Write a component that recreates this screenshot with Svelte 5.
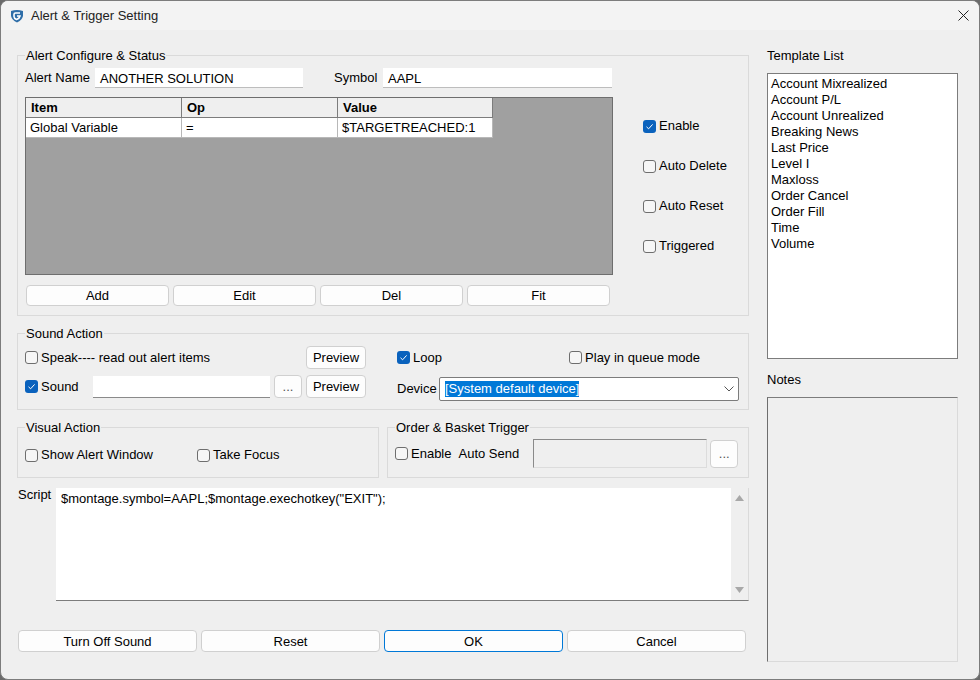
<script>
  const templates = [
    'Account Mixrealized',
    'Account P/L',
    'Account Unrealized',
    'Breaking News',
    'Last Price',
    'Level I',
    'Maxloss',
    'Order Cancel',
    'Order Fill',
    'Time',
    'Volume',
  ]
  const flags = [
    { label: 'Enable', checked: true },
    { label: 'Auto Delete', checked: false },
    { label: 'Auto Reset', checked: false },
    { label: 'Triggered', checked: false },
  ]
  const footer = ['Turn Off Sound', 'Reset', 'OK', 'Cancel']
</script>

{#snippet check(label, checked)}
  <span class="check">
    <span class="box" class:on={checked}>
      {#if checked}
        <svg viewBox="0 0 13 13" width="13" height="13">
          <path d="M3.5 6.8 L5.6 8.8 L9.6 4.4" fill="none" stroke="#fff" stroke-width="1" />
        </svg>
      {/if}
    </span>
    {label}
  </span>
{/snippet}

<div class="window">
  <div class="titlebar">
    <svg class="logo" viewBox="0 0 14 14" width="14" height="14">
      <path d="M1 2 Q7 0 13 2 L13 7 Q12 11 7 13.5 Q2 11 1 7 Z" fill="#2f6ea8" />
      <path d="M10 4 H5.5 Q4 4 4 5.5 V7.5 Q4 9.5 6.5 10.5 Q9.5 9.5 10 7 H7" fill="none" stroke="#fff" stroke-width="1.6" />
    </svg>
    <span class="title">Alert &amp; Trigger Setting</span>
    <svg class="close" viewBox="0 0 11 11" width="11" height="11">
      <path d="M0.5 0.5 L10.5 10.5 M10.5 0.5 L0.5 10.5" stroke="#222" stroke-width="1" />
    </svg>
  </div>

  <div class="body">
    <div class="left">
      <fieldset class="alert">
        <legend>Alert Configure &amp; Status</legend>
        <div class="alert-inner">
          <div class="alert-main">
            <div class="name-row">
              <span class="name-label">Alert Name</span>
              <span class="input name">ANOTHER SOLUTION</span>
              <span class="symbol-label">Symbol</span>
              <span class="input symbol">AAPL</span>
            </div>
            <div class="grid">
              <div class="grid-row head">
                <span class="c1">Item</span><span class="c2">Op</span><span class="c3">Value</span>
              </div>
              <div class="grid-row">
                <span class="c1">Global Variable</span><span class="c2">=</span><span class="c3">$TARGETREACHED:1</span>
              </div>
            </div>
            <div class="grid-btns">
              <button>Add</button>
              <button>Edit</button>
              <button>Del</button>
              <button>Fit</button>
            </div>
          </div>
          <div class="flags">
            {#each flags as f}
              {@render check(f.label, f.checked)}
            {/each}
          </div>
        </div>
      </fieldset>

      <fieldset class="sound">
        <legend>Sound Action</legend>
        <div class="sound-cols">
          <div class="sound-left">
            <div class="sound-row">
              {@render check('Speak---- read out alert items', false)}
              <button class="preview">Preview</button>
            </div>
            <div class="sound-row">
              {@render check('Sound', true)}
              <span class="input file"></span>
              <button class="dots">...</button>
              <button class="preview">Preview</button>
            </div>
          </div>
          <div class="sound-right">
            <div class="loop-row">
              {@render check('Loop', true)}
              {@render check('Play in queue mode', false)}
            </div>
            <div class="device-row">
              <span class="device-label">Device</span>
              <div class="select">
                <span class="selected">[System default device]</span>
                <svg viewBox="0 0 10 6" width="10" height="6">
                  <path d="M0.5 0.5 L5 5 L9.5 0.5" fill="none" stroke="#555" stroke-width="1" />
                </svg>
              </div>
            </div>
          </div>
        </div>
      </fieldset>

      <div class="split">
        <fieldset class="visual">
          <legend>Visual Action</legend>
          <div class="visual-row">
            {@render check('Show Alert Window', false)}
            {@render check('Take Focus', false)}
          </div>
        </fieldset>
        <fieldset class="order">
          <legend>Order &amp; Basket Trigger</legend>
          <div class="order-row">
            {@render check('Enable', false)}
            <span class="auto">Auto Send</span>
            <span class="auto-input"></span>
            <button class="dots big">...</button>
          </div>
        </fieldset>
      </div>

      <div class="script-row">
        <span class="script-label">Script</span>
        <div class="script">
          <div class="script-text">$montage.symbol=AAPL;$montage.exechotkey("EXIT");</div>
          <div class="scrollbar">
            <svg viewBox="0 0 9 6" width="9" height="6"><path d="M0 6 L4.5 0 L9 6 Z" fill="#a8a8a8" /></svg>
            <svg viewBox="0 0 9 6" width="9" height="6"><path d="M0 0 L4.5 6 L9 0 Z" fill="#a8a8a8" /></svg>
          </div>
        </div>
      </div>

      <div class="footer">
        {#each footer as b}
          <button class:primary={b === 'OK'}>{b}</button>
        {/each}
      </div>
    </div>

    <div class="right">
      <div class="side-label">Template List</div>
      <div class="list">
        {#each templates as t}
          <div>{t}</div>
        {/each}
      </div>
      <div class="side-label notes-label">Notes</div>
      <div class="notes"></div>
    </div>
  </div>
</div>

<style>
  :global(body) {
    margin: 0;
    background: #6a6a6a;
  }
  .window {
    width: 980px;
    height: 680px;
    box-sizing: border-box;
    border: 1px solid #7c7c7c;
    border-radius: 8px;
    background: #efefef;
    overflow: hidden;
    font-family: 'Liberation Sans', Arial, sans-serif;
    font-size: 13px;
    color: #000;
    line-height: 16px;
  }
  .titlebar {
    height: 29px;
    background: #f3f3f3;
    display: flex;
    align-items: center;
    padding: 0 10px 0 9px;
  }
  .title {
    margin-left: 7px;
    flex: 1;
    color: #222;
  }
  .body {
    display: flex;
    padding: 16px 0 0 16px;
  }
  .left {
    width: 732px;
    flex: none;
  }
  .right {
    width: 191px;
    margin-left: 18px;
    flex: none;
    padding-top: 2px;
  }
  fieldset {
    margin: 0;
    padding: 0;
    border: 1px solid #dadada;
    min-width: 0;
    box-sizing: border-box;
  }
  legend {
    padding: 2px 1px 0;
    line-height: 16px;
  }
  .alert {
    height: 270px;
    padding: 4px 0 0 7px;
  }
  .alert-inner {
    display: flex;
  }
  .alert-main {
    width: 588px;
  }
  .name-row {
    display: flex;
    align-items: center;
    height: 20px;
  }
  .name-label {
    width: 70px;
  }
  .input {
    display: block;
    box-sizing: border-box;
    height: 20px;
    line-height: 21px;
    padding-left: 5px;
    background: #fff;
    border-bottom: 1px solid #bdbdbd;
  }
  .name {
    width: 208px;
  }
  .symbol-label {
    margin-left: 31px;
    width: 49px;
  }
  .symbol {
    width: 229px;
  }
  .grid {
    margin-top: 9px;
    height: 178px;
    box-sizing: border-box;
    background: #a0a0a0;
    border: 1px solid #6e6e6e;
  }
  .grid-row {
    display: flex;
    height: 20px;
    box-sizing: border-box;
    width: 467px;
    background: #fff;
  }
  .grid-row span {
    padding-left: 4px;
    line-height: 19px;
    box-sizing: border-box;
    border-right: 1px solid #b8b8b8;
    border-bottom: 1px solid #b8b8b8;
  }
  .grid-row.head {
    background: #efefef;
    font-weight: bold;
  }
  .grid-row.head span {
    padding-left: 5px;
    border-color: #7c7c7c;
  }
  .c1 {
    width: 156px;
  }
  .c2 {
    width: 156px;
  }
  .c3 {
    width: 155px;
  }
  .grid-btns {
    display: flex;
    gap: 4px;
    margin: 10px 0 0 1px;
  }
  .grid-btns button {
    width: 143px;
  }
  button {
    display: block;
    box-sizing: border-box;
    height: 21px;
    padding: 0;
    font: inherit;
    color: #000;
    background: #fdfdfd;
    border: 1px solid #d0d0d0;
    border-radius: 4px;
  }
  .flags {
    display: flex;
    flex-direction: column;
    gap: 24px;
    margin: 50px 0 0 30px;
  }
  .check {
    display: inline-flex;
    align-items: center;
    gap: 3px;
    height: 16px;
    white-space: nowrap;
  }
  .box {
    width: 13px;
    height: 13px;
    box-sizing: border-box;
    border: 1px solid #6e6e6e;
    border-radius: 3px;
    background: #f6f6f6;
    display: block;
    flex: none;
  }
  .box.on {
    border: none;
    background: #0a62bd;
  }
  .box svg {
    display: block;
  }
  .sound {
    margin-top: 8px;
    height: 86px;
    padding: 4px 0 0 7px;
  }
  .sound-cols {
    display: flex;
  }
  .sound-left {
    width: 341px;
    flex: none;
  }
  .sound-row {
    display: flex;
    align-items: center;
    height: 23px;
    margin-bottom: 6px;
  }
  .sound-row .check {
    flex: none;
  }
  .preview {
    width: 60px;
    height: 23px;
    margin-left: auto;
  }
  .file {
    width: 177px;
    height: 22px;
    margin-left: auto;
    border-bottom-color: #8a8a8a;
  }
  .dots {
    width: 28px;
    height: 23px;
    margin-left: 4px;
    color: #555;
  }
  .sound-row .dots + .preview {
    margin-left: 4px;
  }
  .sound-right {
    margin-left: 31px;
    width: 342px;
  }
  .loop-row {
    display: flex;
    justify-content: space-between;
    height: 23px;
    align-items: center;
    width: 303px;
    margin-bottom: 8px;
  }
  .device-row {
    display: flex;
    align-items: center;
    height: 24px;
  }
  .device-label {
    width: 42px;
    flex: none;
    margin-bottom: 1px;
  }
  .select {
    width: 300px;
    height: 24px;
    box-sizing: border-box;
    display: flex;
    align-items: center;
    justify-content: space-between;
    padding: 0 4px 0 5px;
    background: #fff;
    border: 1px solid #7c7c7c;
    border-radius: 2px;
  }
  .selected {
    background: #0078d7;
    color: #fff;
    line-height: 16px;
  }
  .split {
    display: flex;
    gap: 8px;
    margin-top: 8px;
  }
  .visual,
  .order {
    height: 60px;
    padding-left: 7px;
    width: 362px;
  }
  .visual-row {
    display: flex;
    gap: 44px;
    margin-top: 11px;
  }
  .order-row {
    display: flex;
    align-items: center;
    height: 29px;
    margin-top: 3px;
  }
  .auto {
    margin-left: 7px;
  }
  .auto-input {
    display: block;
    width: 174px;
    height: 29px;
    box-sizing: border-box;
    margin-left: 14px;
    border: 1px solid #dcdcdc;
    border-top-color: #8a8a8a;
    border-left-color: #8a8a8a;
    background: #efefef;
  }
  .big {
    height: 28px;
    margin-left: 3px;
  }
  .script-row {
    display: flex;
    margin-top: 10px;
  }
  .script-label {
    width: 38px;
    margin-left: 1px;
    line-height: 14px;
  }
  .script {
    flex: 1;
    height: 113px;
    box-sizing: border-box;
    display: flex;
    background: #fff;
    border-bottom: 1px solid #7c7c7c;
    border-right: 1px solid #dadada;
  }
  .script-text {
    flex: 1;
    padding: 3px 0 0 5px;
  }
  .scrollbar {
    width: 17px;
    display: flex;
    flex-direction: column;
    justify-content: space-between;
    align-items: center;
    padding: 7px 0;
    box-sizing: border-box;
    background: #efefef;
  }
  .footer {
    display: flex;
    gap: 4px;
    margin: 29px 0 0 1px;
  }
  .footer button {
    width: 179px;
    height: 22px;
    padding-top: 1px;
  }
  .footer .primary {
    border: 1px solid #0078d7;
  }
  .side-label {
    height: 25px;
  }
  .list {
    height: 286px;
    box-sizing: border-box;
    background: #fff;
    border: 1px solid #7c7c7c;
    padding: 2px 3px;
  }
  .notes-label {
    margin-top: 13px;
  }
  .notes {
    height: 265px;
    box-sizing: border-box;
    border: 1px solid #dadada;
    border-top: 1px solid #7c7c7c;
    border-left: 1px solid #6e6e6e;
  }
</style>
